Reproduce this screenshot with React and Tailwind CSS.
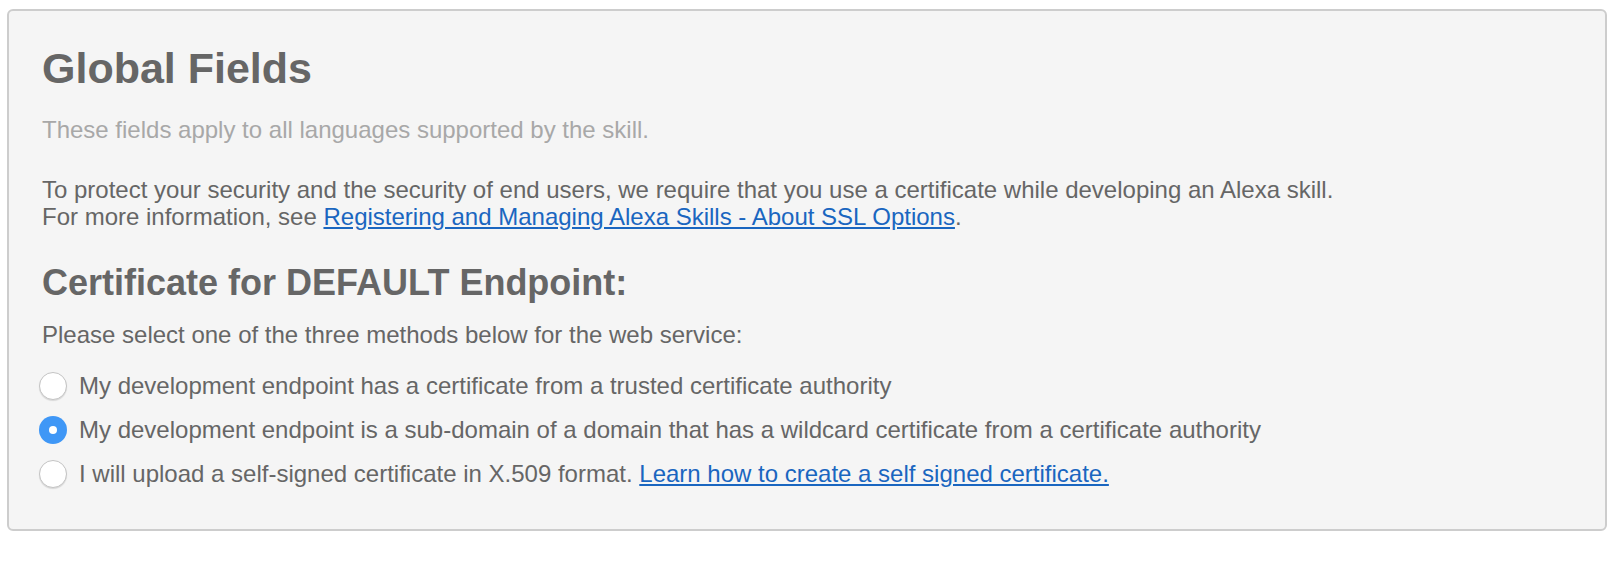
import React from "react";

function Radio({ checked }) {
  return checked ? (
    <span className="flex h-[28px] w-[28px] shrink-0 items-center justify-center rounded-full bg-[#3f97f6]">
      <span className="h-[8px] w-[8px] rounded-full bg-white" />
    </span>
  ) : (
    <span className="h-[28px] w-[28px] shrink-0 rounded-full border border-[#c4c4c4] bg-white shadow-[0_1px_1px_rgba(0,0,0,0.12)]" />
  );
}

export default function App() {
  const options = [
    { checked: false, text: "My development endpoint has a certificate from a trusted certificate authority" },
    { checked: true, text: "My development endpoint is a sub-domain of a domain that has a wildcard certificate from a certificate authority" },
    { checked: false, text: "I will upload a self-signed certificate in X.509 format. ", link: "Learn how to create a self signed certificate." },
  ];
  return (
    <div className="bg-white w-[1616px] h-[562px] pt-[9px] pl-[7px]" style={{ fontFamily: '"Liberation Sans", Arial, sans-serif' }}>
      <div className="w-[1600px] h-[522px] rounded-[6px] border-2 border-[#cdcdcd] bg-[#f5f5f5] pl-[33px] pt-[36px]">
        <h1 className="text-[43px] leading-[43px] font-bold text-[#666666]">Global Fields</h1>
        <p className="mt-[26px] text-[24px] leading-[27px] text-[#a8a8a8]">
          These fields apply to all languages supported by the skill.
        </p>
        <p className="mt-[33px] text-[24px] leading-[27px] text-[#666666]">
          To protect your security and the security of end users, we require that you use a certificate while developing an Alexa skill.
          <br />
          For more information, see{" "}
          <a href="#" className="text-[#1a66c0] underline">
            Registering and Managing Alexa Skills - About SSL Options
          </a>
          .
        </p>
        <h2 className="mt-[35px] text-[36px] leading-[36px] font-bold text-[#666666]">Certificate for DEFAULT Endpoint:</h2>
        <p className="mt-[20px] text-[24px] leading-[27px] text-[#666666]">
          Please select one of the three methods below for the web service:
        </p>
        <div className="mt-[24px] flex flex-col gap-[16px] -ml-[3px]">
          {options.map((o, i) => (
            <label key={i} className="flex items-center gap-[12px] h-[28px]">
              <Radio checked={o.checked} />
              <span className="text-[24px] leading-[28px] text-[#666666]">
                {o.text}
                {o.link && (
                  <a href="#" className="text-[#1a66c0] underline">
                    {o.link}
                  </a>
                )}
              </span>
            </label>
          ))}
        </div>
      </div>
    </div>
  );
}
